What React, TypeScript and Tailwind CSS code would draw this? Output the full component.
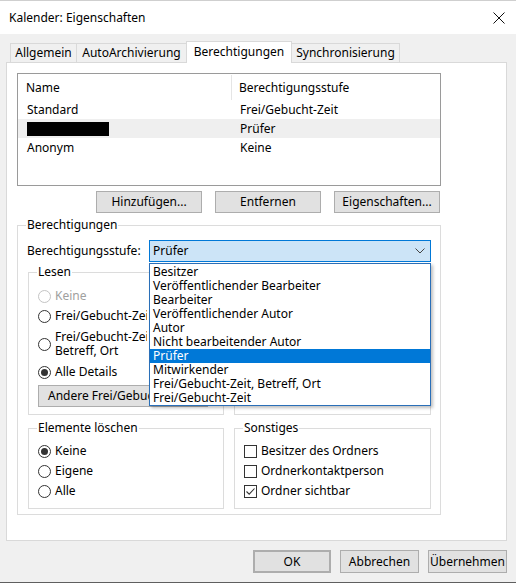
import React from "react";

function Radio({ checked, disabled }: { checked?: boolean; disabled?: boolean }) {
  return (
    <span
      className={`flex h-[13px] w-[13px] shrink-0 items-center justify-center rounded-full border bg-white ${
        disabled ? "border-[#c4c4c4]" : "border-[#333333]"
      }`}
    >
      {checked ? <span className="h-[7px] w-[7px] rounded-full bg-[#333333]" /> : null}
    </span>
  );
}

function Check({ checked }: { checked?: boolean }) {
  return (
    <span className="flex h-[13px] w-[13px] shrink-0 items-center justify-center border border-[#333333] bg-white">
      {checked ? (
        <svg width="11" height="11" viewBox="0 0 11 11">
          <path d="M1.5 5.5 L4.2 8.2 L9.5 2.5" fill="none" stroke="#333" strokeWidth="1.1" />
        </svg>
      ) : null}
    </span>
  );
}

function Group({ title, className, children }: { title?: string; className?: string; children?: React.ReactNode }) {
  return (
    <fieldset className={`border border-[#dcdcdc] pl-[9px] pr-[9px] ${className ?? ""}`}>
      {title ? <legend className="ml-[-1px] px-[1px] leading-[16px]">{title}</legend> : null}
      {children}
    </fieldset>
  );
}

function Btn({ label, className }: { label: string; className?: string }) {
  return (
    <div className={`flex h-[22px] items-center justify-center border border-[#adadad] bg-[#e1e1e1] ${className ?? ""}`}>
      {label}
    </div>
  );
}

const levels = [
  "Besitzer",
  "Veröffentlichender Bearbeiter",
  "Bearbeiter",
  "Veröffentlichender Autor",
  "Autor",
  "Nicht bearbeitender Autor",
  "Prüfer",
  "Mitwirkender",
  "Frei/Gebucht-Zeit, Betreff, Ort",
  "Frei/Gebucht-Zeit",
];

export default function App() {
  return (
    <div className="flex h-[583px] w-[516px] flex-col overflow-hidden border-b border-[#5f5f5f] bg-[#f0f0f0] font-['Noto_Sans',sans-serif] text-[12px] leading-[16px] text-black">
      {/* title bar */}
      <div className="flex h-[34px] shrink-0 items-center justify-between border-t border-[#cfcfcf] bg-white pl-[9px] pr-[11px] pt-[1px]">
        <span>Kalender: Eigenschaften</span>
        <svg width="12" height="12" viewBox="0 0 12 12">
          <path d="M0.5 0.5 L11.5 11.5 M11.5 0.5 L0.5 11.5" stroke="#111" strokeWidth="1" />
        </svg>
      </div>

      {/* tabs */}
      <div className="flex h-[28px] shrink-0 items-end pl-[10px]">
        <div className="flex h-[19px] w-[67px] items-center justify-center border border-b-0 border-[#d9d9d9]">Allgemein</div>
        <div className="-ml-px flex h-[19px] w-[111px] items-center justify-center border border-b-0 border-[#d9d9d9]">AutoArchivierung</div>
        <div className="relative z-10 -mb-px -ml-px flex h-[22px] w-[106px] items-center justify-center border border-b-0 border-[#d9d9d9] bg-white pb-[1px]">
          Berechtigungen
        </div>
        <div className="-ml-px flex h-[19px] w-[109px] items-center justify-center border border-b-0 border-[#d9d9d9]">Synchronisierung</div>
      </div>

      {/* tab page */}
      <div className="ml-[6px] h-[479px] w-[501px] shrink-0 border border-[#d9d9d9] bg-white pl-[10px] pt-[10px]">
        <div className="h-[113px] w-[424px] border border-[#9a9a9a]">
          <div className="flex h-[26px] items-center pt-[1px]">
            <div className="flex h-full w-[214px] items-center border-r border-[#e5e5e5] pl-[8px]">Name</div>
            <div className="pl-[7px]">Berechtigungsstufe</div>
          </div>
          {[
            { name: "Standard", level: "Frei/Gebucht-Zeit" },
            { name: "", level: "Prüfer", hidden: true },
            { name: "Anonym", level: "Keine" },
          ].map((r, i) => (
            <div key={i} className={`flex h-[19px] items-center pt-[1px] ${r.hidden ? "bg-[#efefef]" : ""}`}>
              <div className="flex w-[215px] items-center pl-[9px]">
                {r.hidden ? <span className="h-[14px] w-[82px] bg-black" /> : r.name}
              </div>
              <div className="pl-[7px]">{r.level}</div>
            </div>
          ))}
        </div>

        <div className="mt-[5px] flex w-[424px] justify-end gap-[13px] pr-[1px]">
          <Btn label="Hinzufügen..." className="w-[106px]" />
          <Btn label="Entfernen" className="w-[106px]" />
          <Btn label="Eigenschaften..." className="w-[106px]" />
        </div>

        <Group title="Berechtigungen" className="mt-[4px] w-[424px] pb-[5px]">
          <div className="mt-[7px] flex h-[22px] items-center">
            <div className="w-[122px]">Berechtigungsstufe:</div>
            <div className="relative h-[22px] w-[282px]">
              <div className="flex h-full items-center justify-between border border-[#0078d7] bg-[#cce4f7] pl-[3px] pr-[5px]">
                <span>Prüfer</span>
                <svg width="10" height="6" viewBox="0 0 10 6">
                  <path d="M0.5 0.5 L5 5 L9.5 0.5" fill="none" stroke="#444" strokeWidth="1" />
                </svg>
              </div>
              {/* open dropdown list */}
              <div className="absolute left-0 top-[23px] z-20 w-full border border-[#2a6fb8] bg-white pt-[1px] shadow-[2px_2px_3px_rgba(0,0,0,0.25)]">
                {levels.map((l) => (
                  <div
                    key={l}
                    className={`h-[14px] pl-[3px] leading-[14px] ${l === "Prüfer" ? "bg-[#0078d7] text-white" : ""}`}
                  >
                    {l}
                  </div>
                ))}
              </div>
            </div>
          </div>

          <div className="ml-[1px] mt-[2px] grid grid-cols-[196px_197px] gap-x-[10px]">
            <Group title="Lesen" className="pb-[7px]">
              <div className="mt-[6px] flex h-[20px] items-center gap-[4px] text-[#a0a0a0]">
                <Radio disabled />
                Keine
              </div>
              <div className="flex h-[20px] items-center gap-[4px]">
                <Radio />
                <span className="w-[92px] overflow-hidden whitespace-nowrap">Frei/Gebucht-Zeit</span>
              </div>
              <div className="flex h-[36px] items-center gap-[4px]">
                <Radio />
                <span className="w-[92px] overflow-hidden whitespace-nowrap leading-[14px]">
                  Frei/Gebucht-Zeit,
                  <br />
                  Betreff, Ort
                </span>
              </div>
              <div className="flex h-[20px] items-center gap-[4px]">
                <Radio checked />
                Alle Details
              </div>
              <Btn label="Andere Frei/Gebuc" className="mt-[3px] w-[170px] justify-start overflow-hidden whitespace-nowrap pl-[9px]" />
            </Group>
            {/* Schreiben box: its content is hidden under the open list */}
            <Group className="mt-[8px] pb-[7px]" />
          </div>

          <div className="ml-[1px] mt-[5px] grid grid-cols-[196px_197px] gap-x-[10px]">
            <Group title="Elemente löschen" className="pb-[7px]">
              <div className="mt-[5px] flex h-[20px] items-center gap-[4px]">
                <Radio checked />
                Keine
              </div>
              <div className="flex h-[20px] items-center gap-[4px]">
                <Radio />
                Eigene
              </div>
              <div className="flex h-[20px] items-center gap-[4px]">
                <Radio />
                Alle
              </div>
            </Group>
            <Group title="Sonstiges" className="pb-[7px]">
              <div className="mt-[5px] flex h-[20px] items-center gap-[4px]">
                <Check />
                Besitzer des Ordners
              </div>
              <div className="flex h-[20px] items-center gap-[4px]">
                <Check />
                Ordnerkontaktperson
              </div>
              <div className="flex h-[20px] items-center gap-[4px]">
                <Check checked />
                Ordner sichtbar
              </div>
            </Group>
          </div>
        </Group>
      </div>

      {/* footer */}
      <div className="flex flex-1 justify-end gap-[9px] pr-[9px] pt-[9px]">
        <Btn label="OK" className="h-[23px] w-[78px] border-2 border-[#0078d7]" />
        <Btn label="Abbrechen" className="h-[23px] w-[79px]" />
        <Btn label="Übernehmen" className="h-[23px] w-[79px]" />
      </div>
    </div>
  );
}
